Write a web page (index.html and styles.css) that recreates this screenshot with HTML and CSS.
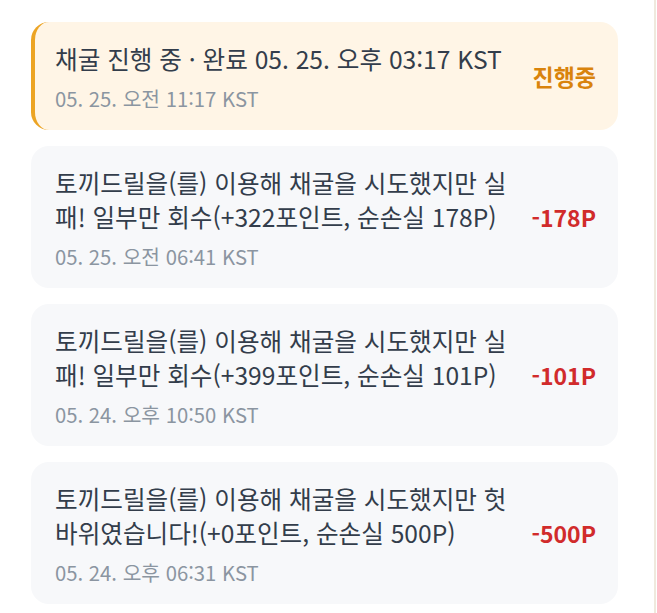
FILE: index.html
```html
<!DOCTYPE html>
<html lang="ko">

<head>
    <meta charset="UTF-8">
    <meta name="viewport" content="width=device-width, initial-scale=1.0">
    <title>채굴 기록</title>
    <link rel="stylesheet" href="styles.css">
</head>

<body>
    <div class="side">
        <ul class="logs">
            <li class="log active">
                <div class="info">
                    <p class="msg">채굴 진행 중 · 완료 05. 25. 오후 03:17 KST</p>
                    <p class="time">05. 25. 오전 11:17 KST</p>
                </div>
                <span class="amount ing">진행중</span>
            </li>
            <li class="log">
                <div class="info">
                    <p class="msg">토끼드릴을(를) 이용해 채굴을 시도했지만 실패! 일부만 회수(+322포인트, 순손실 178P)</p>
                    <p class="time">05. 25. 오전 06:41 KST</p>
                </div>
                <span class="amount minus">-178P</span>
            </li>
            <li class="log">
                <div class="info">
                    <p class="msg">토끼드릴을(를) 이용해 채굴을 시도했지만 실패! 일부만 회수(+399포인트, 순손실 101P)</p>
                    <p class="time">05. 24. 오후 10:50 KST</p>
                </div>
                <span class="amount minus">-101P</span>
            </li>
            <li class="log">
                <div class="info">
                    <p class="msg">토끼드릴을(를) 이용해 채굴을 시도했지만 헛바위였습니다!(+0포인트, 순손실 500P)</p>
                    <p class="time">05. 24. 오후 06:31 KST</p>
                </div>
                <span class="amount minus">-500P</span>
            </li>
        </ul>
    </div>
</body></html>
```

FILE: styles.css
```css
* {
    box-sizing: border-box;
}

body {
    margin: 0;
    background-color: #fff;
    font-family: "Noto Sans CJK KR", "Noto Sans", sans-serif;
}

.side {
    width: 656px;
    min-height: 613px;
    padding: 22px 36px 0 31px;
    border-right: 2px solid #efe9dd;
}

.logs {
    list-style: none;
    margin: 0;
    padding: 0;
    display: flex;
    flex-direction: column;
    gap: 16px;
}

.log {
    display: flex;
    align-items: center;
    gap: 14px;
    padding: 19px 22px 19px 24px;
    border-radius: 18px;
    background-color: #f7f8fa;
}

.log.active {
    padding-left: 20px;
    background-color: #fff5e6;
    border-left: 4px solid #eca424;
}

.info {
    flex: 1;
}

.msg {
    margin: 0;
    font-size: 24.6px;
    line-height: 34px;
    color: #333d4b;
}

.time {
    margin: 10px 0 0;
    font-size: 20.3px;
    line-height: 26px;
    color: #8b95a1;
}

.amount {
    font-size: 23px;
    font-weight: 700;
    white-space: nowrap;
}

.ing {
    color: #d9830c;
}

.minus {
    color: #d12b2b;
}
```
